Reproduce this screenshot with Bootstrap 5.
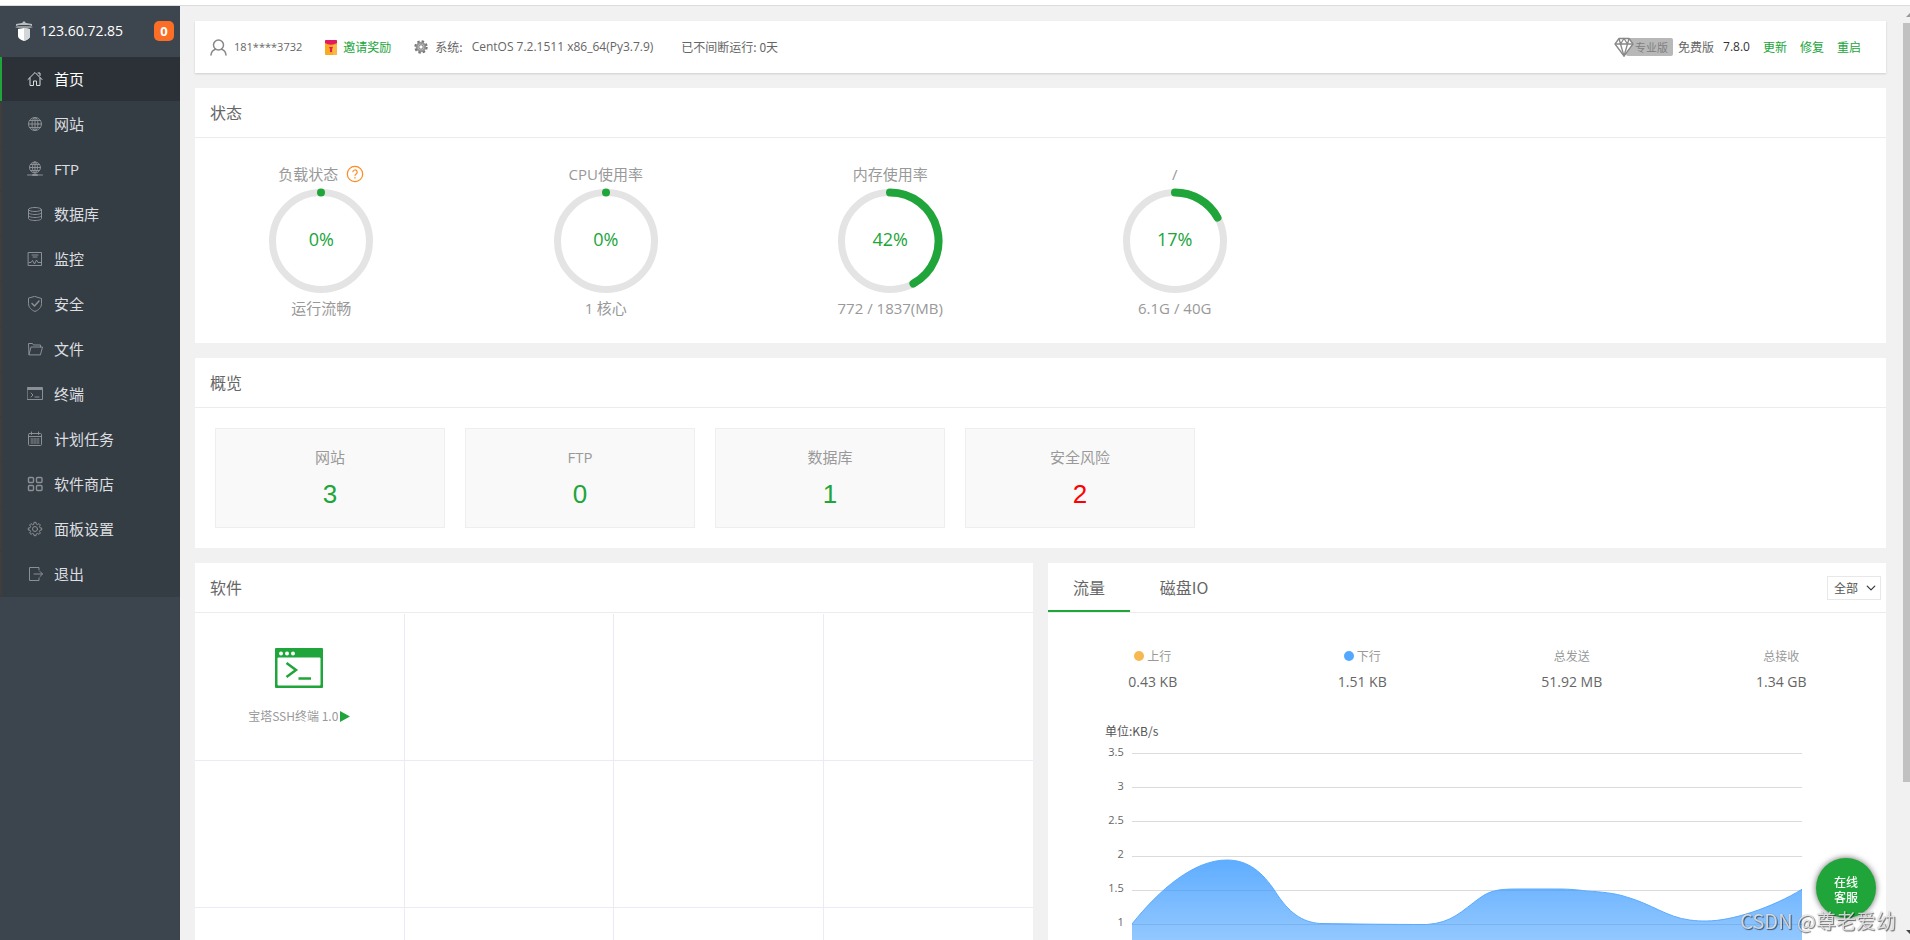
<!DOCTYPE html>
<html lang="zh-CN">
<head>
<meta charset="utf-8">
<meta name="viewport" content="width=device-width, initial-scale=1">
<title>首页</title>
<link href="https://cdn.jsdelivr.net/npm/bootstrap@5.3.0/dist/css/bootstrap.min.css" rel="stylesheet">
<style>
  :root { --green: #20a53a; --line: #ececec; }
  body { font-family: "Noto Sans CJK SC", sans-serif; font-size: 12px; line-height: 20px; color: #666; background: #f1f1f1; }
  .latin, .latin-sm, .latin-md { font-family: "Open Sans", "Noto Sans CJK SC", sans-serif; }
  .latin { font-size: 12px; }
  .latin-sm { font-size: 11px; }
  .latin-md { font-size: 15px; }
  span.latin-md { line-height: 1; }
  a { text-decoration: none; }
  svg { flex: none; display: block; }
  .stroke-icon { fill: none; stroke: currentColor; stroke-width: 1; stroke-linecap: round; stroke-linejoin: round; }
  .text-green { color: var(--green); }

  .window-edge { height: 6px; background: #fff; border-bottom: 1px solid #dcdcdc; }

  .sidebar { width: 180px; background: #3c444d; }
  .brand { height: 51px; padding: 0 6px 1px 15px; gap: 7px; color: #fff; background: #3d454e; font: 14px/20px "Open Sans", sans-serif; }
  .msg-count { width: 20px; height: 20px; line-height: 20px; border-radius: 5px; background: #fc6d26; font-size: 13px; }
  .menu { background: #353d44; }
  .menu-link { height: 44px; margin-bottom: 1px; padding-left: 25px; border-left: 2px solid #403e3d; color: #dcdee0; font-size: 15px; gap: 11px; }
  .menu-link svg { color: #8b9094; }
  .menu-link.active { background: #2c3138; border-color: var(--green); color: #fff; }
  .menu-link.active svg { color: #d8dadb; }

  .content { padding: 15px 17px 0 15px; }
  .panel { background: #fff; margin-bottom: 15px; }
  .topbar { height: 52px; padding: 0 25px 0 15px; box-shadow: 0 1px 2px rgba(0,0,0,.15); }
  .user-icon { color: #888; }
  .user-name { margin-left: 7px; }
  .invite { margin-left: 23px; gap: 6px; }
  .gear { margin-left: 23px; }
  .os-label { margin-left: 7px; }
  .os-name { margin-left: 9px; }
  .uptime { margin-left: 28px; }
  .pro-tag { background: #b8b8b8; color: #808080; font-size: 11px; line-height: 18px; padding: 0 5px 0 9px; margin-left: -8px; border-radius: 2px; }
  .edition { margin-left: 5px; }
  .version { margin-left: 9px; color: #333; }
  .topbar-link { margin-left: 13px; color: var(--green); }
  .panel-title { height: 50px; line-height: 49px; padding: 0 15px; margin: 0; font-size: 16px; font-weight: 400; color: #666; border-bottom: 1px solid var(--line); }

  .gauges { padding: 25px 0 24px; margin-left: -16px; color: #999; font-size: 15px; line-height: 22px; }
  .gauge-line { height: 22px; }
  .gauge-ring { width: 106px; height: 106px; margin: 2px auto 4px; }
  .gauge-ring span { position: absolute; inset: 0; line-height: 104px; color: var(--green); font-size: 18px; font-family: "Open Sans", sans-serif; }

  .overview { padding: 20px; gap: 20px; }
  .tile { width: 230px; height: 100px; padding-top: 16px; background: #f9f9f9; border: 1px solid #eee; color: #999; font-size: 15px; line-height: 24px; }
  .tile a { display: block; margin-top: 10px; font: 26px/30px "Liberation Sans", sans-serif; color: var(--green); }
  .tile a.risk { color: #f00; }

  .lower { gap: 15px; }
  .lower > section { flex: 1 1 0; min-width: 0; }
  .soft-grid { display: grid; grid-template-columns: repeat(4, 1fr); grid-auto-rows: 147px; padding-top: 1px; }
  .soft-cell { border-right: 1px solid #ebebf8; border-bottom: 1px solid #ebebf8; color: #999; padding-top: 34px; }
  .soft-cell:nth-child(4n) { border-right: 0; }
  .soft-name { margin-top: 18px; gap: 2px; color: inherit; }

  .net-head { height: 50px; border-bottom: 1px solid var(--line); padding-right: 5px; }
  .net-tab { height: 49px; border: 0; border-bottom: 2px solid transparent; background: none; color: #666; font-size: 16px; padding: 0; width: 82px; }
  .net-tab + .net-tab { width: 108px; }
  .net-tab.active { border-color: var(--green); }
  .net-head .form-select { width: 54px; height: 24px; padding: 0 16px 0 6px; border: 1px solid #e8e8e8; border-radius: 0; font-size: 12px; line-height: 20px; color: #555; background-size: 10px 10px; background-position: right 4px center; }
  .net-stats { padding-top: 33px; color: #999; }
  .net-stats strong { display: block; font-weight: 400; color: #666; line-height: 20px; margin-top: 6px; font-size: 14px; font-family: "Open Sans", sans-serif; }
  .dot { width: 10px; height: 10px; border-radius: 50%; display: inline-block; margin-right: 3px; }
  .dot-up { background: #f7b851; }
  .dot-down { background: #52a9ff; }
  .unit { padding: 29px 0 0 57px; color: #555; }
  .chart { padding: 1px 10% 0 0; }
  .axis { width: 11.1%; flex: none; padding-right: 8px; text-align: right; }
  .axis span { display: block; height: 34px; }
  .plot { height: 240px; margin-top: 11px; min-width: 0; }

  .scroll-rail { width: 7px; background: #f1f1f1; }
  .scroll-thumb { height: 81.3%; background: #c1c1c1; }
  .scroll-end { height: 17px; }
  .service { position: fixed; right: 34px; bottom: 22px; width: 60px; height: 60px; border: 0; border-radius: 50%; background: var(--green); color: #fff; font-size: 12px; font-weight: 500; line-height: 15px; padding: 2px 0 0; box-shadow: 0 0 6px rgba(0,0,0,.6); }
  .watermark { position: fixed; right: 14px; bottom: 5px; font-size: 20px; line-height: 28px; color: rgba(255,255,255,.75); text-shadow: 1px 1px 1px rgba(0,0,0,.55), 0 0 1px rgba(0,0,0,.4); pointer-events: none; }
</style>
</head>
<body class="vh-100 overflow-hidden d-flex flex-column">
<div class="window-edge flex-shrink-0"></div>
<div class="d-flex flex-grow-1 overflow-hidden">

  <nav class="sidebar flex-shrink-0">
    <div class="brand d-flex align-items-center">
      <svg width="18" height="20" viewBox="0 0 18 20"><path d="M9 0l2 2 6 1v2l-3-1H4L1 5V3l6-1z" fill="#b9bdc0"/><path d="M0 6l3-1h12l3 1-2 1H2z" fill="#8f9599"/><path d="M3 8l6-1 6 1v7q0 3-6 5-6-2-6-5z" fill="#fff"/><path d="M9 7l6 1v7q0 3-6 5z" fill="#d3d6d8"/></svg>
      <span class="flex-grow-1">123.60.72.85</span>
      <span class="msg-count text-center fw-bold">0</span>
    </div>
    <div class="menu d-flex flex-column">
      <a href="#" class="menu-link active d-flex align-items-center"><svg class="stroke-icon" width="16" height="16" viewBox="0 0 16 16"><path d="M1 8.500L8 1.500l7 7M3 7v7.500h3.500V10h3v4.500H13V7M11 2h2v2.500"/></svg>首页</a>
      <a href="#" class="menu-link d-flex align-items-center"><svg class="stroke-icon" width="16" height="16" viewBox="0 0 16 16"><circle cx="8" cy="8" r="6.500"/><ellipse cx="8" cy="8" rx="3" ry="6.500"/><path d="M8 1.500v13M1.500 8h13M2.500 4.500h11M2.500 11.500h11"/></svg>网站</a>
      <a href="#" class="menu-link d-flex align-items-center"><svg class="stroke-icon" width="16" height="16" viewBox="0 0 16 16"><circle cx="8" cy="6.500" r="5.500"/><ellipse cx="8" cy="6.500" rx="2.500" ry="5.500"/><path d="M8 1v11M2.500 6.500h11M3.500 3.500h9M3.500 9.500h9M.5 14h15"/><path d="M6 14h4" stroke-width="2"/></svg><span class="latin-md">FTP</span></a>
      <a href="#" class="menu-link d-flex align-items-center"><svg class="stroke-icon" width="16" height="16" viewBox="0 0 16 16"><ellipse cx="8" cy="3.500" rx="6.500" ry="2"/><path d="M1.500 3.500v9c0 1.200 3 2 6.500 2s6.500-.8 6.500-2v-9M1.500 6.500c0 1.200 3 2 6.500 2s6.500-.8 6.500-2M1.500 9.500c0 1.200 3 2 6.500 2s6.500-.8 6.500-2"/></svg>数据库</a>
      <a href="#" class="menu-link d-flex align-items-center"><svg class="stroke-icon" width="16" height="16" viewBox="0 0 16 16"><path d="M1.500 1.500h13v13h-13z"/><path d="M5 4h6M6 6h4M2 11.500h2l1.500-2 2 3.500 2-4 1.500 2.500h3"/></svg>监控</a>
      <a href="#" class="menu-link d-flex align-items-center"><svg class="stroke-icon" width="16" height="16" viewBox="0 0 16 16"><path d="M8 .5l6.500 2v5c0 4-3 6.500-6.500 8-3.500-1.500-6.500-4-6.500-8v-5z"/><path d="M5 7.500l2.500 2.500L12 5" stroke-width="1.500"/></svg>安全</a>
      <a href="#" class="menu-link d-flex align-items-center"><svg class="stroke-icon" width="16" height="16" viewBox="0 0 16 16"><path d="M2 13.500l-.5-11h4l1 1.500h7v2M2 13.500L4 6h11.500l-2 7.500z"/></svg>文件</a>
      <a href="#" class="menu-link d-flex align-items-center"><svg class="stroke-icon" width="16" height="16" viewBox="0 0 16 16"><path d="M.5 1.500h15v12H.5z"/><path d="M4 7l2 2-2 2M8 11h4"/><path d="M1 3h14" stroke-width="2"/></svg>终端</a>
      <a href="#" class="menu-link d-flex align-items-center"><svg class="stroke-icon" width="16" height="16" viewBox="0 0 16 16"><rect x="1.500" y="2.500" width="13" height="12" rx="1"/><path d="M1.500 5.500h13M4.500 1v2.500M11.500 1v2.500"/><path d="M4 8h2m1 0h2m1 0h2M4 10h2m1 0h2m1 0h2M4 12h2m1 0h2m1 0h2"/></svg>计划任务</a>
      <a href="#" class="menu-link d-flex align-items-center"><svg class="stroke-icon" width="16" height="16" viewBox="0 0 16 16"><g stroke-width="1.400"><rect x="1.500" y="1.500" width="5" height="5" rx="1"/><rect x="9.500" y="1.500" width="5.500" height="5" rx="1"/><rect x="1.500" y="9.500" width="5" height="5" rx="1"/><rect x="9.500" y="9.500" width="5.500" height="5" rx="1"/></g></svg>软件商店</a>
      <a href="#" class="menu-link d-flex align-items-center"><svg class="stroke-icon" width="16" height="16" viewBox="0 0 16 16"><circle cx="8" cy="8" r="2.500"/><path d="M6.800 3L7 1.300h2L9.200 3l1.400.6L12 2.600 13.400 4l-1 1.400.6 1.400 1.700.2v2l-1.700.2-.6 1.400 1 1.400-1.400 1.400-1.400-1-1.400.6-.2 1.700H7L6.800 13l-1.400-.6-1.400 1L2.600 12l1-1.400L3 9.200 1.300 9V7L3 6.800l.6-1.400L2.600 4 4 2.600l1.400 1z"/></svg>面板设置</a>
      <a href="#" class="menu-link d-flex align-items-center"><svg class="stroke-icon" width="16" height="16" viewBox="0 0 16 16"><path d="M12 4V1.500H2.500v13H12V12M7 8h8.500M13 5.500L15.500 8 13 10.500"/></svg>退出</a>
    </div>
  </nav>

  <main class="content flex-grow-1 overflow-hidden">
    <header class="panel topbar d-flex align-items-center">
      <svg class="stroke-icon user-icon" width="17" height="17" viewBox="0 0 17 17"><circle cx="8.500" cy="6" r="5" stroke-width="1.500"/><path d="M1 16c.3-3 2-5 4.500-5.800M16 16c-.3-3-2-5-4.500-5.800" stroke-width="1.500"/></svg>
      <span class="user-name latin-sm">181****3732</span>
      <a href="#" class="invite text-green d-flex align-items-center"><svg width="12" height="15" viewBox="0 0 12 15"><rect width="12" height="15" rx="1" fill="#fba91f"/><path d="M8 5h4v9a1 1 0 0 1-1 1H8z" fill="#fbb84a"/><path d="M0 1q0-1 1-1h10q1 0 1 1v2Q6 6.500 0 3z" fill="#e5195f"/><path d="M4 7h4L7 9v3H5V9z" fill="#e5195f"/></svg>邀请奖励</a>
      <svg class="gear" width="14" height="14" viewBox="0 0 14 14" fill="none" stroke="#777"><circle cx="7" cy="7" r="4" stroke-width="2.500" stroke="#999"/><circle cx="7" cy="7" r="5.700" stroke-width="2" stroke-dasharray="2.400 2.077"/><circle cx="7" cy="7" r="2.200"/></svg>
      <span class="os-label">系统:</span>
      <span class="os-name latin">CentOS 7.2.1511 x86_64(Py3.7.9)</span>
      <span class="uptime">已不间断运行: 0天</span>
      <div class="ms-auto d-flex align-items-center">
        <svg class="position-relative z-1" width="20" height="20" viewBox="0 0 20 20" fill="#fff" stroke="#888" stroke-width="1.300" stroke-linejoin="round"><path d="M5 1.500h10L19 7l-9 12L1 7z"/><path d="M1 7h18M5 1.500L6.500 7 10 1.500 13.500 7 15 1.500M6.500 7L10 19l3.500-12" fill="none"/></svg>
        <span class="pro-tag">专业版</span>
        <span class="edition">免费版</span>
        <span class="version latin">7.8.0</span>
        <a href="#" class="topbar-link">更新</a>
        <a href="#" class="topbar-link">修复</a>
        <a href="#" class="topbar-link">重启</a>
      </div>
    </header>

    <section class="panel">
      <h2 class="panel-title">状态</h2>
      <div class="gauges row gx-0 text-center">
        <div class="col-2">
          <div class="gauge-line d-flex justify-content-center align-items-center"><span>负载状态</span><a href="#" aria-label="帮助" class="ms-2"><svg width="18" height="18" viewBox="0 0 18 18" fill="none" stroke="#ff8a1e" stroke-width="1.200"><circle cx="9" cy="9" r="7.700"/><path d="M6.800 7.200a2.200 2.200 0 1 1 3.300 1.900q-1.100.6-1.100 1.700"/><path d="M9 12v1.400"/></svg></a></div>
          <div class="gauge-ring position-relative"><svg width="106" height="106" viewBox="0 0 106 106"><circle cx="53" cy="54" r="48.500" fill="none" stroke="#e4e4e4" stroke-width="7"/><circle cx="53" cy="5.500" r="4" fill="#20a53a"/></svg><span>0%</span></div>
          <div class="gauge-line">运行流畅</div>
        </div>
        <div class="col-2">
          <div class="gauge-line"><span class="latin-md">CPU</span>使用率</div>
          <div class="gauge-ring position-relative"><svg width="106" height="106" viewBox="0 0 106 106"><circle cx="53" cy="54" r="48.500" fill="none" stroke="#e4e4e4" stroke-width="7"/><circle cx="53" cy="5.500" r="4" fill="#20a53a"/></svg><span>0%</span></div>
          <div class="gauge-line"><span class="latin-md">1</span> 核心</div>
        </div>
        <div class="col-2">
          <div class="gauge-line">内存使用率</div>
          <div class="gauge-ring position-relative"><svg width="106" height="106" viewBox="0 0 106 106"><circle cx="53" cy="54" r="48.500" fill="none" stroke="#e4e4e4" stroke-width="7"/><path d="M53 5.500A48.500 48.500 0 0 1 76.400 96.500" fill="none" stroke="#20a53a" stroke-width="8" stroke-linecap="round"/></svg><span>42%</span></div>
          <div class="gauge-line latin-md">772 / 1837(MB)</div>
        </div>
        <div class="col-2">
          <div class="gauge-line latin-md">/</div>
          <div class="gauge-ring position-relative"><svg width="106" height="106" viewBox="0 0 106 106"><circle cx="53" cy="54" r="48.500" fill="none" stroke="#e4e4e4" stroke-width="7"/><path d="M53 5.500A48.500 48.500 0 0 1 95.500 30.600" fill="none" stroke="#20a53a" stroke-width="8" stroke-linecap="round"/></svg><span>17%</span></div>
          <div class="gauge-line latin-md">6.1G / 40G</div>
        </div>
      </div>
    </section>

    <section class="panel">
      <h2 class="panel-title">概览</h2>
      <div class="overview d-flex flex-wrap text-center">
        <div class="tile">网站<a href="#">3</a></div>
        <div class="tile"><span class="latin-md">FTP</span><a href="#">0</a></div>
        <div class="tile">数据库<a href="#">1</a></div>
        <div class="tile">安全风险<a href="#" class="risk">2</a></div>
      </div>
    </section>

    <div class="lower d-flex">
      <section class="panel">
        <h2 class="panel-title">软件</h2>
        <div class="soft-grid">
          <div class="soft-cell d-flex flex-column align-items-center">
            <svg width="48" height="40" viewBox="0 0 48 40"><rect width="48" height="40" rx="1" fill="#20a53a"/><rect x="2.500" y="9.500" width="43" height="28" rx="1" fill="#fff"/><g fill="#fff"><circle cx="6" cy="5.500" r="2"/><circle cx="12" cy="5.500" r="2"/><circle cx="18" cy="5.500" r="2"/></g><path d="M11.500 15l9.500 7-9.500 7M23.500 30.500H36" fill="none" stroke="#20a53a" stroke-width="2.500"/></svg>
            <a href="#" class="soft-name d-flex align-items-center">宝塔SSH终端 1.0<svg width="10" height="11" viewBox="0 0 10 11"><path d="M0 0l10 5.500L0 11z" fill="#20a53a"/></svg></a>
          </div>
          <div class="soft-cell"></div><div class="soft-cell"></div><div class="soft-cell"></div>
          <div class="soft-cell"></div><div class="soft-cell"></div><div class="soft-cell"></div><div class="soft-cell"></div>
          <div class="soft-cell"></div><div class="soft-cell"></div><div class="soft-cell"></div><div class="soft-cell"></div>
        </div>
      </section>

      <section class="panel">
        <div class="net-head d-flex align-items-center">
          <button type="button" class="net-tab active">流量</button>
          <button type="button" class="net-tab">磁盘IO</button>
          <select class="form-select ms-auto" aria-label="网卡"><option>全部</option></select>
        </div>
        <div class="net-stats row g-0 text-center">
          <div class="col-3"><i class="dot dot-up"></i>上行<strong>0.43 KB</strong></div>
          <div class="col-3"><i class="dot dot-down"></i>下行<strong>1.51 KB</strong></div>
          <div class="col-3">总发送<strong>51.92 MB</strong></div>
          <div class="col-3">总接收<strong>1.34 GB</strong></div>
        </div>
        <div class="unit">单位:KB/s</div>
        <div class="chart d-flex">
          <div class="axis latin-sm"><span>3.5</span><span>3</span><span>2.5</span><span>2</span><span>1.5</span><span>1</span></div>
          <div class="plot flex-grow-1">
            <svg width="100%" height="240" viewBox="0 0 671 240" preserveAspectRatio="none">
              <defs><linearGradient id="flow" gradientUnits="userSpaceOnUse" x1="0" y1="107" x2="0" y2="240"><stop offset="0" stop-color="#3296ff" stop-opacity=".78"/><stop offset="1" stop-color="#3296ff" stop-opacity=".36"/></linearGradient></defs>
              <path d="M0 .5h671M0 34.500h671M0 68.500h671M0 103.500h671M0 137.500h671M0 171.500h671M0 205.500h671" stroke="#dbdbdb" fill="none"/>
              <path d="M0 171C28 136 62 107 95 107C117 107 131 120 143 138C157 160 170 169 188 170.500C220 171 260 171.500 295 171.500C320 170 330 158 348 145C358 138 365 136 385 136H425C440 136 447 137 455 138C470 139 483 140 495 144C520 151 535 164 558 167C565 168 570 168 575 168C600 168 640 155 671 136V240H0z" fill="url(#flow)"/>
              <path d="M0 171C28 136 62 107 95 107C117 107 131 120 143 138C157 160 170 169 188 170.500C220 171 260 171.500 295 171.500C320 170 330 158 348 145C358 138 365 136 385 136H425C440 136 447 137 455 138C470 139 483 140 495 144C520 151 535 164 558 167C565 168 570 168 575 168C600 168 640 155 671 136" fill="none" stroke="#58aaff"/>
            </svg>
          </div>
        </div>
      </section>
    </div>
  </main>

  <div class="scroll-rail flex-shrink-0 h-100 d-flex flex-column overflow-hidden" aria-hidden="true">
    <div class="scroll-end"><svg width="7" height="17" viewBox="0 0 7 17"><path d="M3 11l4-4v4z" fill="#999"/></svg></div>
    <div class="scroll-thumb"></div>
    <div class="scroll-end mt-auto"><svg width="7" height="17" viewBox="0 0 7 17"><path d="M3 7h4v4z" fill="#444"/></svg></div>
  </div>
</div>

<button type="button" class="service">在线<br>客服</button>
<div class="watermark">CSDN @尊老爱幼</div>
<script src="https://cdn.jsdelivr.net/npm/bootstrap@5.3.0/dist/js/bootstrap.bundle.min.js"></script>
</body>
</html>
